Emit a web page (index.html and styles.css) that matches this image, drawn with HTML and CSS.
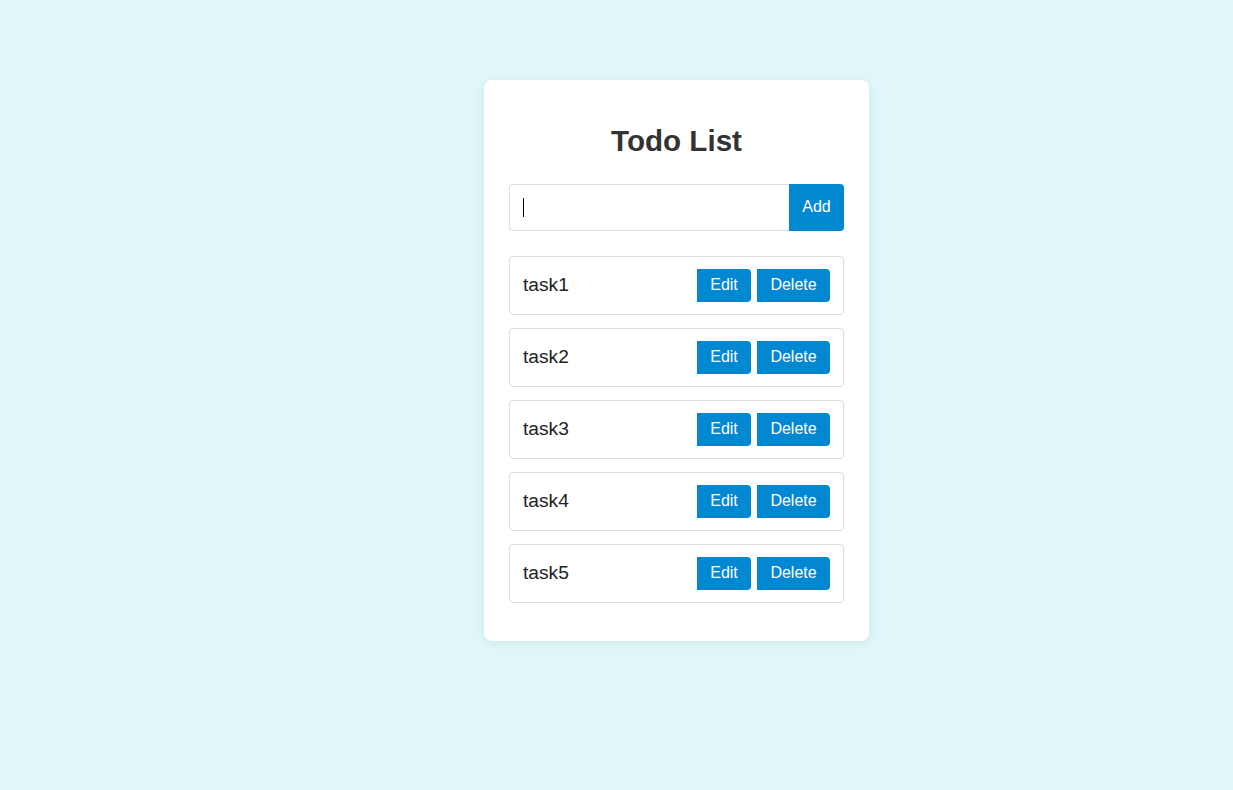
FILE: index.html
```html
<!DOCTYPE html>
<html lang="en">
<head>
<meta charset="utf-8">
<title>Todo List</title>
<link rel="stylesheet" href="styles.css">
</head>
<body>
<div class="card">
  <h1 class="title">Todo List</h1>
  <div class="add-row">
    <div class="input"><span class="caret"></span></div>
    <button class="btn btn-add">Add</button>
  </div>
  <ul class="list">
    <li class="item"><span class="text">task1</span><div class="actions"><button class="btn">Edit</button><button class="btn">Delete</button></div></li>
    <li class="item"><span class="text">task2</span><div class="actions"><button class="btn">Edit</button><button class="btn">Delete</button></div></li>
    <li class="item"><span class="text">task3</span><div class="actions"><button class="btn">Edit</button><button class="btn">Delete</button></div></li>
    <li class="item"><span class="text">task4</span><div class="actions"><button class="btn">Edit</button><button class="btn">Delete</button></div></li>
    <li class="item"><span class="text">task5</span><div class="actions"><button class="btn">Edit</button><button class="btn">Delete</button></div></li>
  </ul>
</div>
</body>
</html>
```
FILE: styles.css
```css
* { box-sizing: border-box; }
html, body { margin: 0; height: 100%; }
body {
  background: #e0f7fa;
  font-family: "Liberation Sans", Arial, sans-serif;
  padding: 80px 0 0 484px;
}
.card {
  width: 385px;
  background: #fff;
  border-radius: 8px;
  box-shadow: 0 2px 10px rgba(0, 0, 0, 0.08);
  padding: 25px 25px 25px;
}
.title {
  margin: 19px 0 27px;
  font-size: 29.6px;
  font-weight: bold;
  color: #333;
  text-align: center;
  line-height: 33px;
}
.add-row {
  display: flex;
  height: 47px;
  margin-bottom: 25px;
}
.input {
  flex: 1;
  border: 1px solid #ddd;
  border-right: none;
  border-radius: 4px 0 0 4px;
  display: flex;
  align-items: center;
  padding-left: 13px;
}
.caret {
  width: 1px;
  height: 19px;
  background: #000;
}
.btn {
  border: none;
  background: #0288d1;
  color: #fff;
  font-family: "Liberation Sans", Arial, sans-serif;
  font-size: 16px;
  padding: 0 13px 2px;
  border-radius: 0 4px 4px 0;
  height: 33px;
  cursor: pointer;
}
.btn-add {
  height: 47px;
  width: 55px;
  padding: 0 0 2px;
}
.list {
  list-style: none;
  margin: 0;
  padding: 0;
}
.item {
  display: flex;
  align-items: center;
  justify-content: space-between;
  border: 1px solid #ddd;
  border-radius: 4px;
  padding: 12px 13px 12px 13px;
  margin-bottom: 13px;
}
.text {
  font-size: 19.2px;
  color: #222;
  padding-bottom: 2px;
}
.actions {
  display: flex;
  gap: 6px;
}
.actions .btn:first-child { width: 54px; padding: 0 0 2px; }
.actions .btn:last-child { width: 73px; padding: 0 0 2px; }
```
